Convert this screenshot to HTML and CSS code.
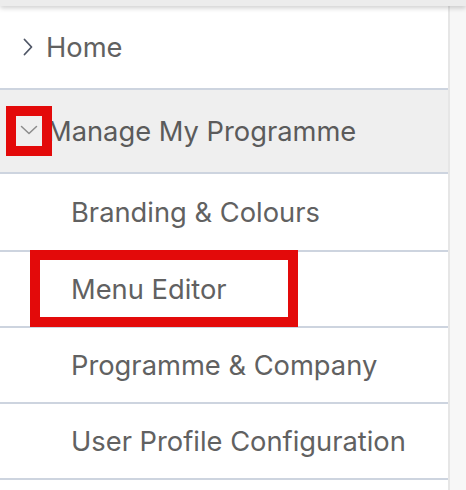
FILE: index.html
```html
<!DOCTYPE html>
<html>
<head>
<meta charset="utf-8">
<link rel="stylesheet" href="styles.css">
</head>
<body>
<div class="topbar"></div>
<div class="layout">
  <nav class="panel">
    <div class="row home">
      <svg class="chev-right" width="10" height="18" viewBox="0 0 10 18"><path d="M1.5 1.5 L8.5 9 L1.5 16.5" fill="none" stroke="#4f5666" stroke-width="1.8" stroke-linecap="round" stroke-linejoin="round"/></svg>
      <span class="label">Home</span>
    </div>
    <div class="row group">
      <svg class="chev-down" width="18" height="10" viewBox="0 0 18 10"><path d="M1.5 1.5 L9 8.5 L16.5 1.5" fill="none" stroke="#8c8c8c" stroke-width="1.5" stroke-linecap="round" stroke-linejoin="round"/></svg>
      <span class="label">Manage My Programme</span>
      <span class="mark mark-chev"></span>
    </div>
    <div class="row sub first">Branding &amp; Colours</div>
    <div class="row sub">Menu Editor<span class="mark mark-item"></span></div>
    <div class="row sub">Programme &amp; Company</div>
    <div class="row sub">User Profile Configuration</div>
  </nav>
  <div class="aside"></div>
</div>
</body>
</html>
```
FILE: styles.css
```css
html, body {
  margin: 0;
  padding: 0;
  height: 100%;
}
body {
  background: #f7f7f7;
  font-family: Inter, "Liberation Sans", Arial, sans-serif;
  color: #616161;
  display: flex;
  flex-direction: column;
  overflow: hidden;
}
.topbar {
  height: 6px;
  background: #ececec;
  box-shadow: 0 2px 5px rgba(0, 0, 0, 0.2);
  position: relative;
  z-index: 2;
  flex: none;
}
.layout {
  display: flex;
  flex: 1;
}
.panel {
  width: 448px;
  background: #fff;
  border-right: 2px solid #e6e6e6;
  flex: none;
}
.aside {
  flex: 1;
  background: #f7f7f7;
}
.row {
  position: relative;
  display: flex;
  align-items: center;
  border-bottom: 2px solid #cdd4df;
  font-size: 27.3px;
}
.home {
  height: 82px;
  padding-left: 23px;
}
.home .label {
  margin-left: 13px;
}
.group {
  height: 82px;
  background: #efefef;
  padding-left: 20px;
  color: #5b5b5b;
}
.group .label {
  margin-left: 9px;
}
.chev-down {
  margin-top: -2px;
}
.sub {
  height: 74px;
  padding-left: 71px;
}
.sub.first {
  height: 76px;
}
.mark {
  position: absolute;
  border: 10px solid #e30a0a;
  box-sizing: border-box;
}
.mark-chev {
  left: 6px;
  top: 16px;
  width: 46px;
  height: 50px;
}
.mark-item {
  left: 30px;
  top: -2px;
  width: 268px;
  height: 77px;
}
```
